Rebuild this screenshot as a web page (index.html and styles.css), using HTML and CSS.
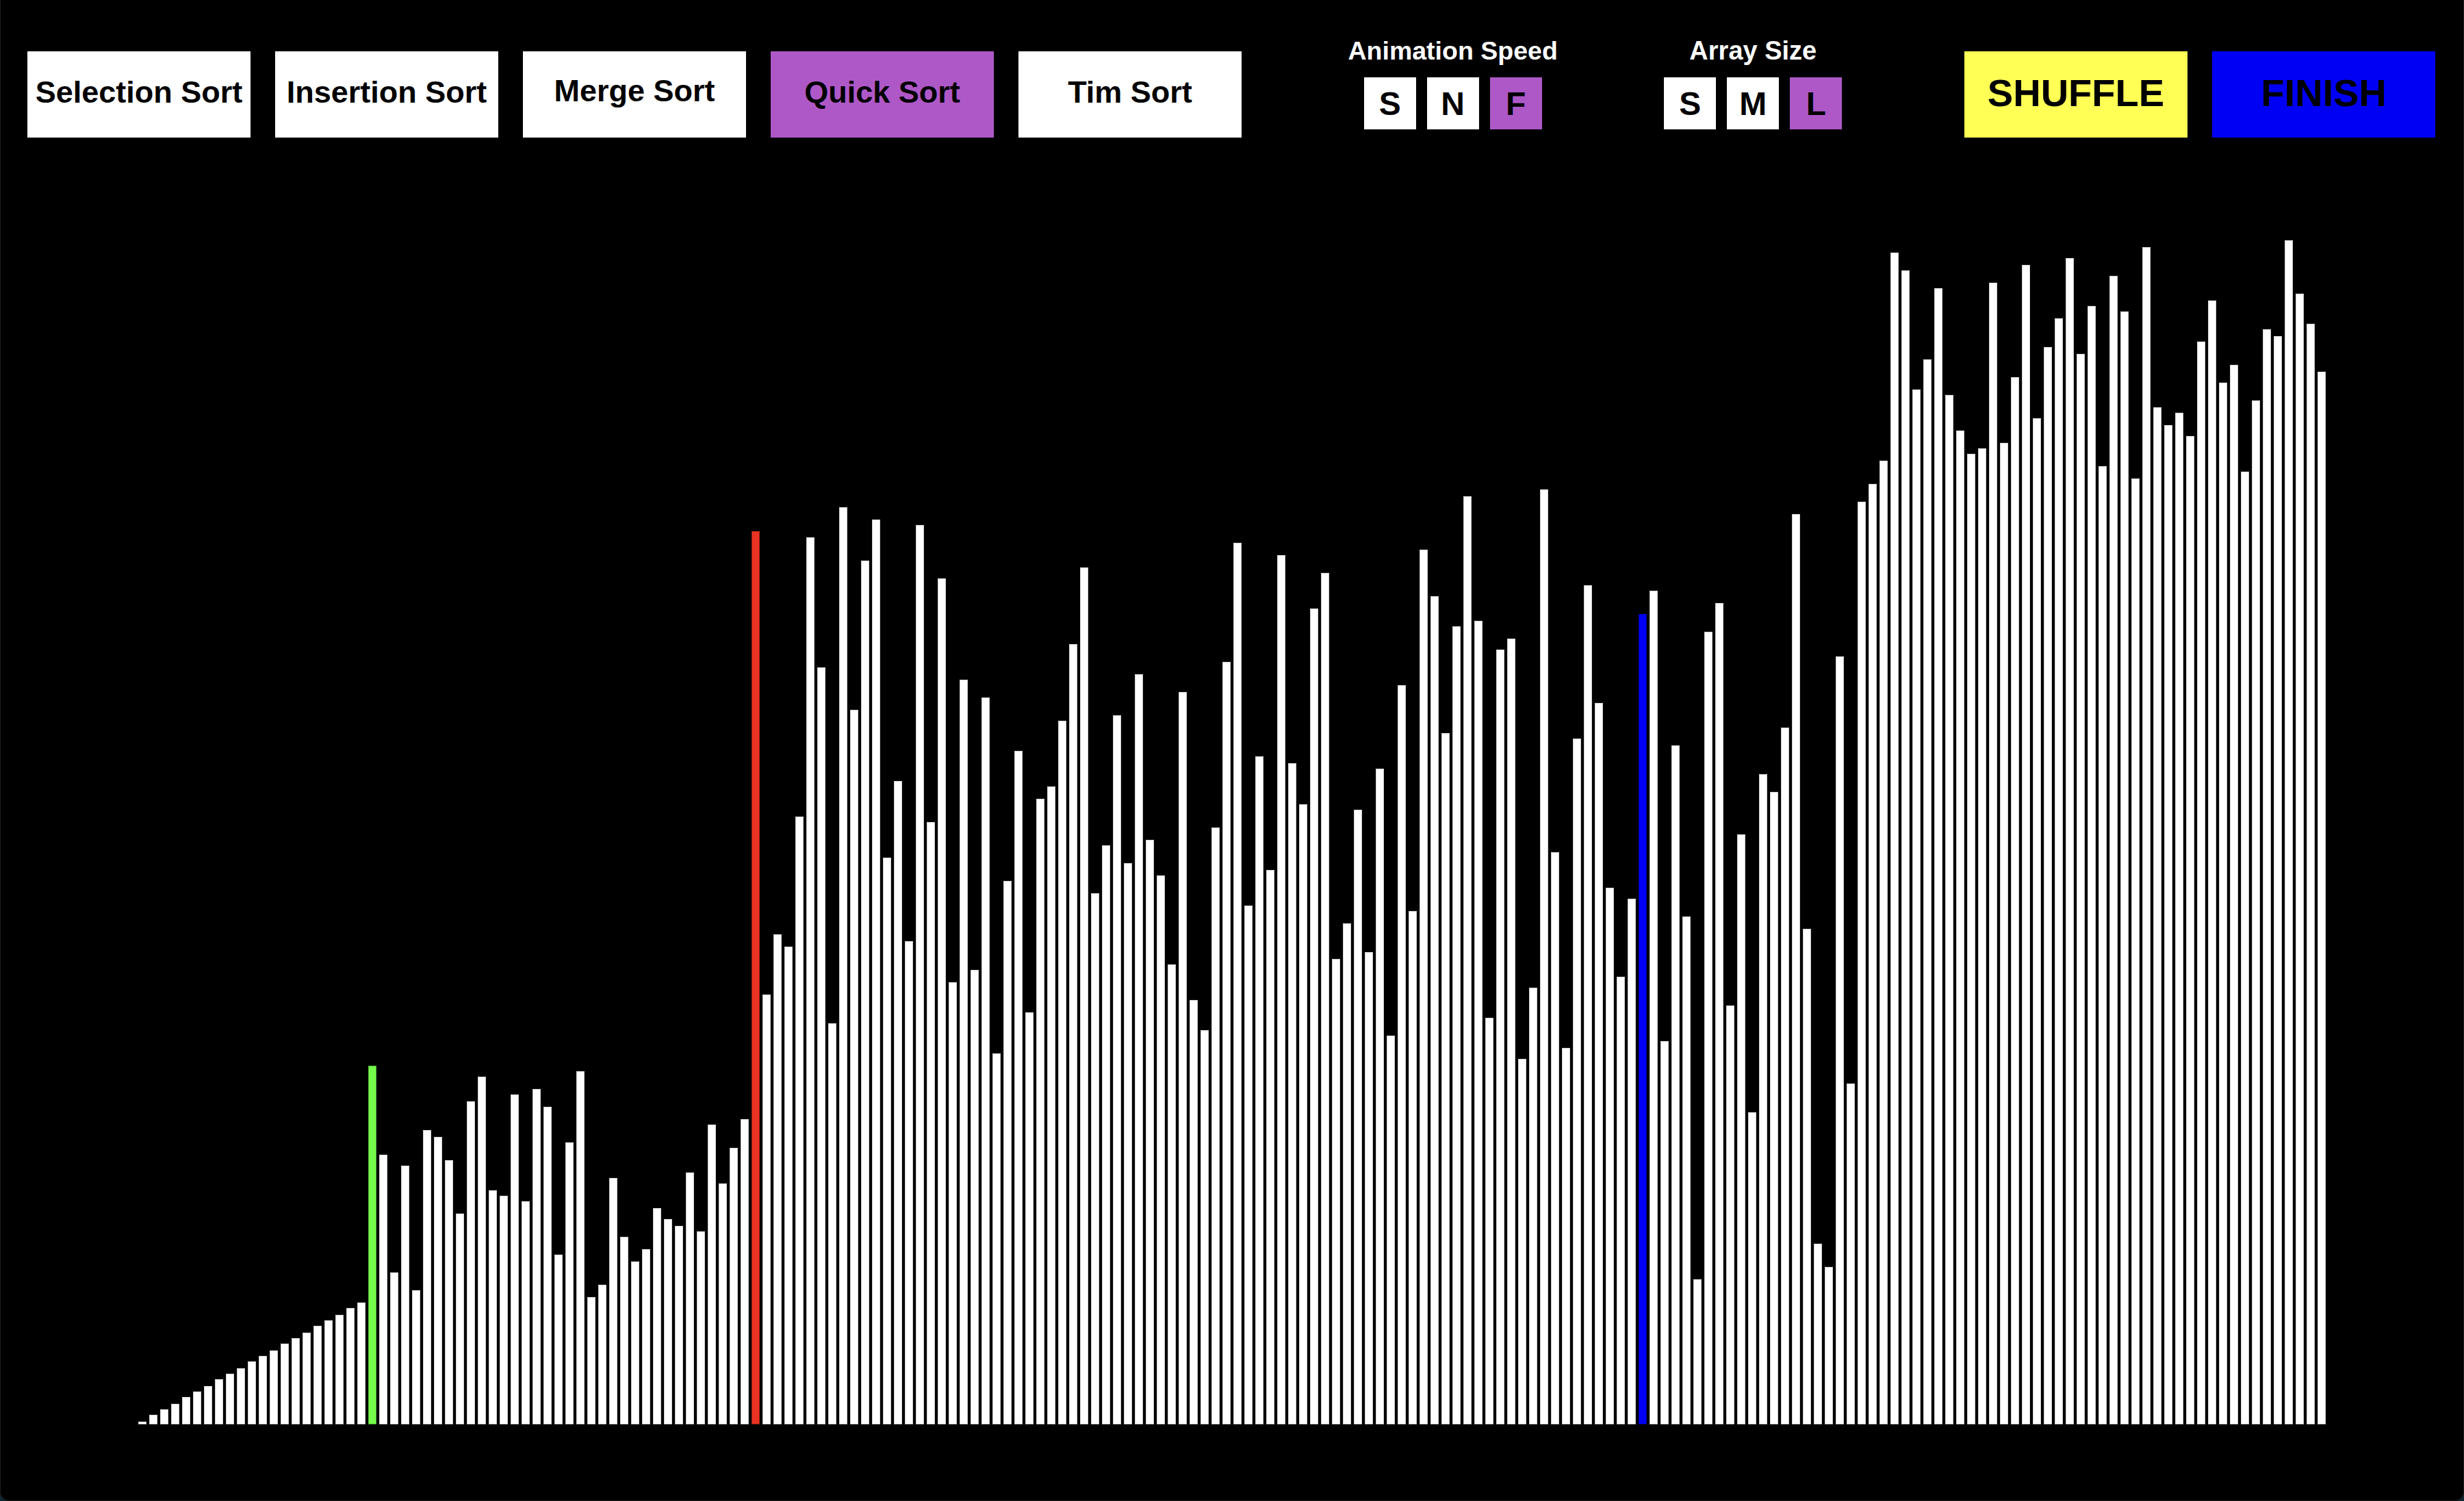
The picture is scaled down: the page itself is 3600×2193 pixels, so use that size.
FILE: index.html
```html
<!DOCTYPE html>
<html lang="en">
<head>
    <meta charset="UTF-8">
    <meta name="viewport" content="width=device-width, initial-scale=1.0">
    <title>Sorting Visualizer</title>
    <link rel="stylesheet" href="styles.css">
</head>
<body>
    <div class="app">
        <div class="toolbar">
            <div class="btn-group">
                <button class="btn">Selection Sort</button>
                <button class="btn">Insertion Sort</button>
                <button class="btn merge">Merge Sort</button>
                <button class="btn active">Quick Sort</button>
                <button class="btn">Tim Sort</button>
            </div>
            <div class="option">
                <div class="option-label speed-label">Animation Speed</div>
                <div class="option-buttons">
                    <button class="small-btn">S</button>
                    <button class="small-btn">N</button>
                    <button class="small-btn active">F</button>
                </div>
            </div>
            <div class="option">
                <div class="option-label">Array Size</div>
                <div class="option-buttons">
                    <button class="small-btn">S</button>
                    <button class="small-btn">M</button>
                    <button class="small-btn active">L</button>
                </div>
            </div>
            <div class="btn-group">
                <button class="btn action shuffle">SHUFFLE</button>
                <button class="btn action finish">FINISH</button>
            </div>
        </div>
        <div id="bars" class="bars"></div>
    </div>
    <script src="app.js"></script>
</body>
</html>
```

FILE: styles.css
```css
* {
    box-sizing: border-box;
}
html, body {
    height: 100%;
}
body {
    margin: 0;
    background: #0e2632;
    font-family: "Liberation Sans", Arial, sans-serif;
}
.app {
    height: 100%;
    display: flex;
    flex-direction: column;
    overflow: hidden;
    background: #000;
    border-radius: 0 0 14px 14px;
    box-shadow: inset 0 -1px 0 #1c1c1c, inset 1px 0 0 #1c1c1c, inset -1px 0 0 #1c1c1c;
}
.toolbar {
    display: flex;
    flex: none;
    justify-content: space-between;
    align-items: flex-end;
    height: 201px;
    padding: 0 42px 0 40px;
}
.btn-group {
    display: flex;
    gap: 36px;
}
.btn {
    width: 326px;
    height: 126px;
    padding: 0 0 6px;
    border: 0;
    background: #fff;
    color: #000;
    font-family: inherit;
    font-size: 45px;
    font-weight: bold;
}
.btn.merge {
    padding-bottom: 10px;
}
.btn.active,
.small-btn.active {
    background: #ae58c8;
}
.btn.action {
    font-size: 56px;
}
.shuffle {
    background: #ffff55;
}
.finish {
    background: #0000f5;
}
.option {
    display: flex;
    flex-direction: column;
    align-items: center;
    gap: 17px;
    width: 260px;
    padding-bottom: 12px;
}
.option-label {
    color: #fff;
    font-size: 38px;
    font-weight: bold;
    line-height: 44px;
    white-space: nowrap;
}
.speed-label {
    font-size: 37.5px;
}
.option-buttons {
    display: flex;
    gap: 16px;
}
.small-btn {
    width: 76px;
    height: 76px;
    padding: 0;
    border: 0;
    background: #fff;
    color: #000;
    font-family: inherit;
    font-size: 48px;
    font-weight: bold;
}
.bars {
    display: flex;
    flex: none;
    align-items: flex-end;
    gap: 4px;
    height: 1880px;
    padding-left: 202px;
}
.bar {
    flex: none;
    width: 12px;
    background: #fff;
    box-shadow: inset 0 0 0 1px #cfcfcf;
}
.bar.pivot {
    background: #ea3323;
    box-shadow: inset 0 0 0 1px #a5251a;
}
.bar.left {
    background: #75fb4c;
    box-shadow: inset 0 0 0 1px #55b838;
}
.bar.right {
    background: #0000f5;
    box-shadow: inset 0 0 0 1px #0000a8;
}
```

FILE: app.js
```js
// Top edge of each bar, measured in page pixels
const tops = [
    2077, 2067, 2059, 2051, 2041, 2033, 2025, 2015, 2007, 1999,
    1989, 1981, 1973, 1963, 1955, 1947, 1937, 1929, 1921, 1911,
    1903, 1557, 1687, 1859, 1703, 1885, 1651, 1661, 1695, 1773,
    1609, 1573, 1739, 1747, 1599, 1755, 1591, 1617, 1833, 1669,
    1565, 1895, 1877, 1721, 1807, 1843, 1825, 1765, 1781, 1791,
    1713, 1799, 1643, 1729, 1677, 1635, 776, 1453, 1365, 1383,
    1193, 785, 975, 1495, 741, 1037, 819, 759, 1253, 1141,
    1375, 767, 1201, 845, 1435, 993, 1417, 1019, 1539, 1287,
    1097, 1479, 1167, 1149, 1053, 941, 829, 1305, 1235, 1045,
    1261, 985, 1227, 1279, 1409, 1011, 1461, 1505, 1209, 967,
    793, 1323, 1105, 1271, 811, 1115, 1175, 889, 837, 1401,
    1349, 1183, 1391, 1123, 1513, 1001, 1331, 803, 871, 1071,
    915, 725, 907, 1487, 949, 933, 1547, 1443, 715, 1245,
    1531, 1079, 855, 1027, 1297, 1427, 1313, 897, 863, 1521,
    1089, 1339, 1869, 923, 881, 1469, 1219, 1625, 1131, 1157,
    1063, 751, 1357, 1817, 1851, 959, 1583, 733, 707, 673,
    369, 395, 569, 525, 421, 577, 629, 663, 655, 413,
    647, 551, 387, 611, 507, 465, 377, 517, 447, 681,
    403, 455, 699, 361, 595, 621, 603, 637, 499, 439,
    559, 533, 689, 585, 481, 491, 351, 429, 473, 543
];

const BASELINE = 2081;
const marked = { 21: 'left', 56: 'pivot', 137: 'right' };

const barsDiv = document.getElementById('bars');

tops.forEach((top, i) => {
    const div = document.createElement('div');
    div.className = marked[i] ? `bar ${marked[i]}` : 'bar';
    div.style.height = `${BASELINE - top}px`;
    barsDiv.appendChild(div);
});
```
